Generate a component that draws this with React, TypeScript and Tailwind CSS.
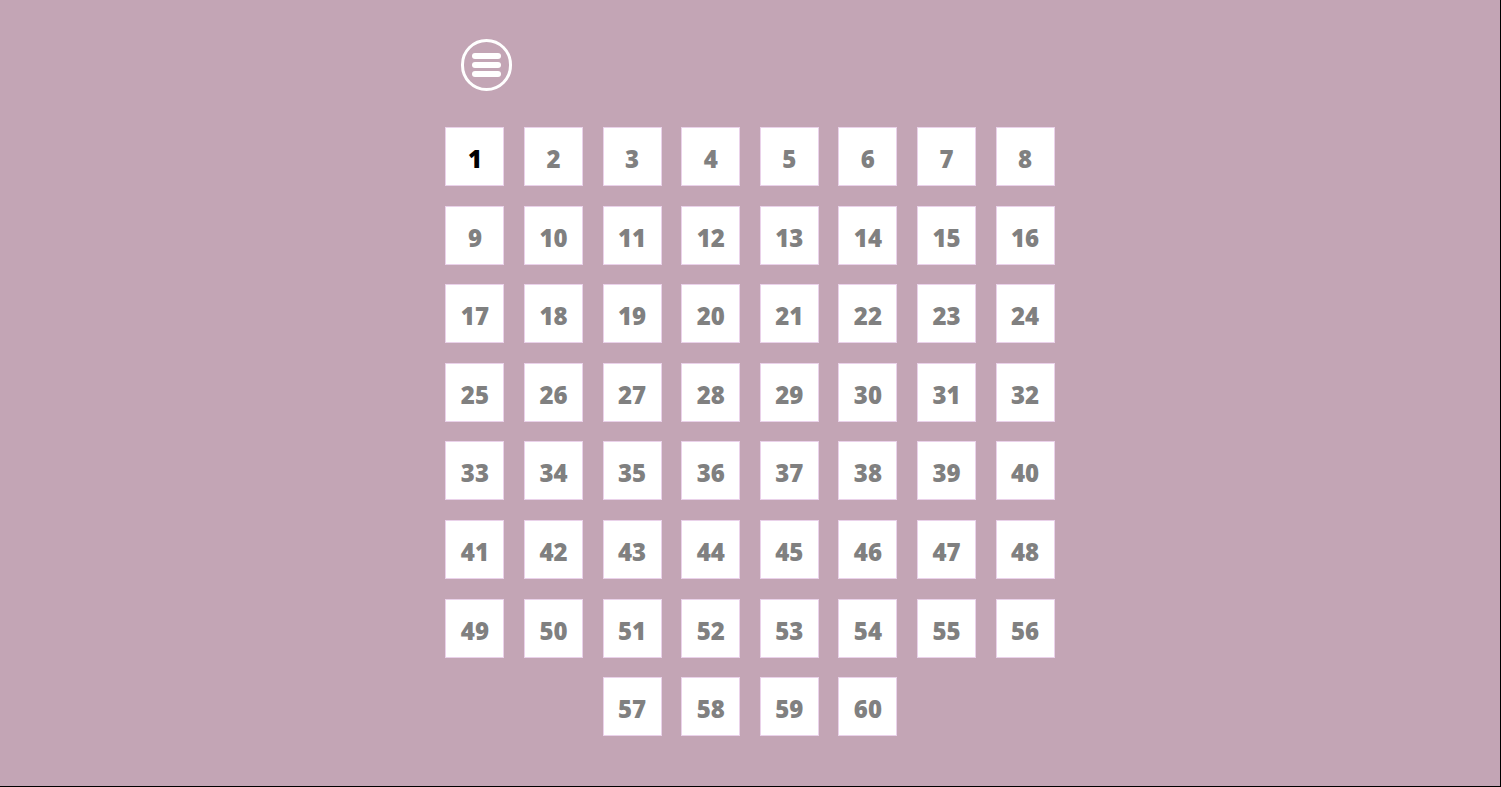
import React from "react";

export default function App() {
  const nums = Array.from({ length: 60 }, (_, i) => i + 1);
  return (
    <div className="w-[1501px] h-[787px] bg-[#c3a5b5] border-r border-b border-black overflow-hidden box-border" style={{ fontFamily: '"Open Sans", "Noto Sans", sans-serif' }}>
      <div className="w-[629px] mx-auto pt-[39px]">
        <div className="pl-[25px] h-[88px]">
          <button className="w-[51px] h-[52px] rounded-full border-[3px] border-white flex flex-col items-center justify-center gap-[3px]">
            <span className="block w-[29px] h-[6px] rounded-full bg-white" />
            <span className="block w-[29px] h-[6px] rounded-full bg-white" />
            <span className="block w-[29px] h-[6px] rounded-full bg-white" />
          </button>
        </div>
        <div className="flex flex-wrap justify-center -mt-[9.8px]">
          {nums.map((n) => (
            <div
              key={n}
              className={`w-[59px] h-[59px] m-[9.8px] bg-white border border-[#ead2ea] flex items-center justify-center pt-[5px] text-[24px] font-extrabold tracking-[0px] ${n === 1 ? "text-black" : "text-[#808080]"}`}
            >
              {n}
            </div>
          ))}
        </div>
      </div>
    </div>
  );
}
